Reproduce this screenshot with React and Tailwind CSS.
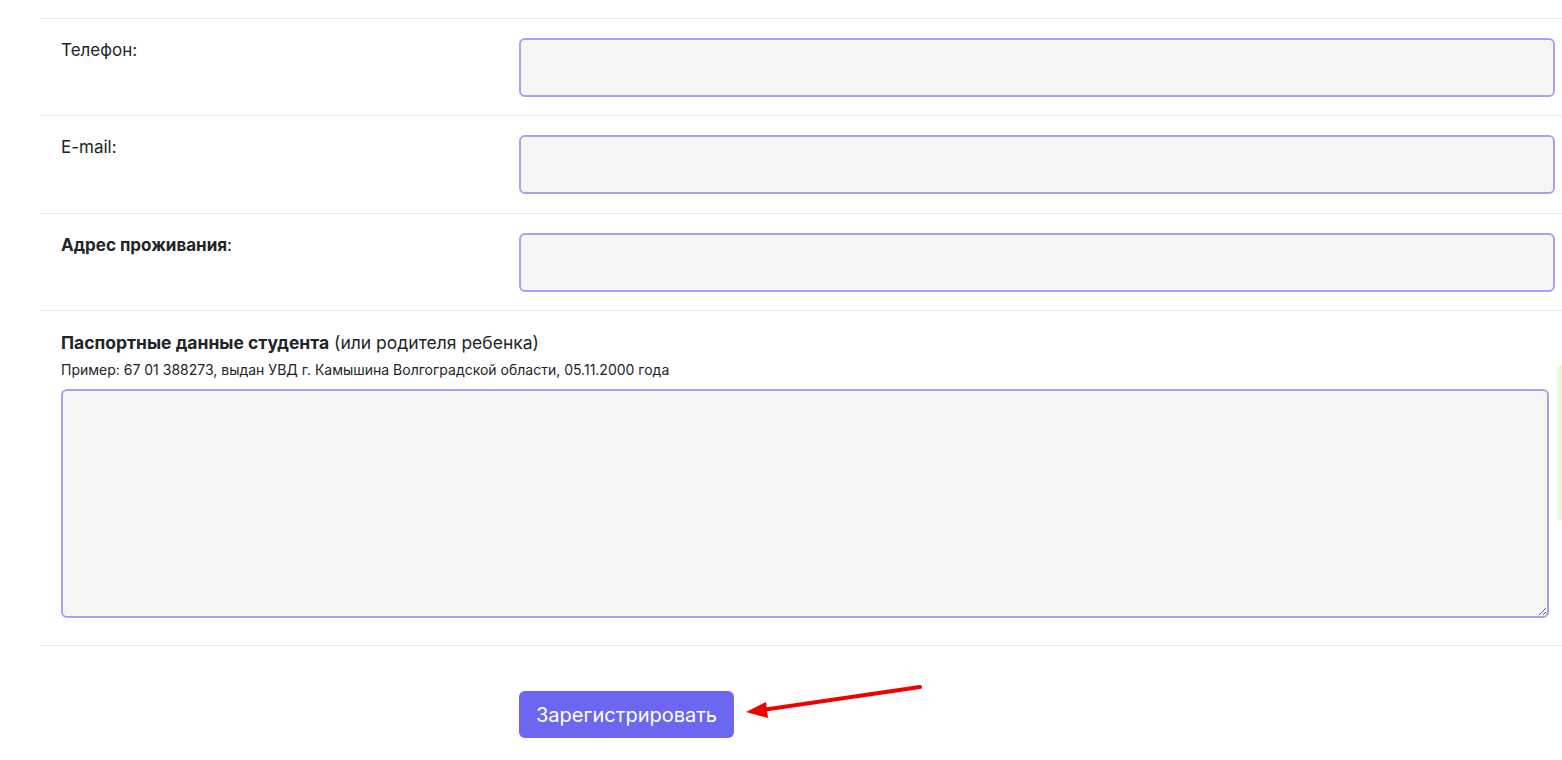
import { useState } from 'react';

const inputCls =
    'w-full h-[59px] rounded-[6px] border-2 border-[#a7a1f6] bg-[#f6f6f6] px-3 outline-none';

const Row = ({ label, h }) => (
    <div className={`flex border-t border-[#e6e6e6] pt-[19px] ${h}`}>
        <div className="w-[479px] shrink-0 pl-[21px] leading-6">{label}</div>
        <div className="flex-1 pr-[7px]">
            <input type="text" className={inputCls} />
        </div>
    </div>
);

const App = () => {
    const [passport, setPassport] = useState('');

    return (
        <div
            className="relative h-[760px] overflow-hidden bg-white text-[17px] text-[#212529]"
            style={{ fontFamily: 'Inter, "Noto Sans", sans-serif' }}
        >
            <div className="ml-[40px] pt-[18px]">
                <Row label="Телефон:" h="h-[97px]" />
                <Row label="E-mail:" h="h-[98px]" />
                <Row
                    label={
                        <>
                            <b className="font-bold">Адрес проживания</b>:
                        </>
                    }
                    h="h-[97px]"
                />

                <div className="border-t border-b border-[#e6e6e6] pt-[20px] pb-[27px] pl-[21px] pr-[13px]">
                    <div className="text-[17.5px] leading-6">
                        <b className="font-bold">Паспортные данные студента</b> (или родителя ребенка)
                    </div>
                    <div className="mt-[5px] text-[14px] leading-5">
                        Пример: 67 01 388273, выдан УВД г. Камышина Волгоградской области, 05.11.2000 года
                    </div>
                    <textarea
                        value={passport}
                        onChange={(e) => setPassport(e.target.value)}
                        className="mt-[9px] block h-[229px] w-full rounded-[6px] border-2 border-[#a7a1f6] bg-[#f6f6f6] p-3 outline-none"
                    />
                </div>

                <div className="pt-[45px] pl-[479px]">
                    <button className="h-[47px] rounded-[6px] bg-[#6c67f0] px-[17px] text-[20px] text-white">
                        Зарегистрировать
                    </button>
                </div>
            </div>

            {/* red annotation arrow */}
            <svg className="absolute left-0 top-0" width="1562" height="760">
                <line x1="920" y1="687" x2="762" y2="710" stroke="#f20000" strokeWidth="4" strokeLinecap="round" />
                <polygon points="746,712 766,702 768,718" fill="#f20000" />
            </svg>

            {/* faint green widget edge */}
            <div className="absolute right-0 top-[365px] h-[155px] w-[6px] rounded-l-[4px] bg-gradient-to-r from-[#f4fcef] to-[#e3f6d8]" />
        </div>
    );
};

export default App;
